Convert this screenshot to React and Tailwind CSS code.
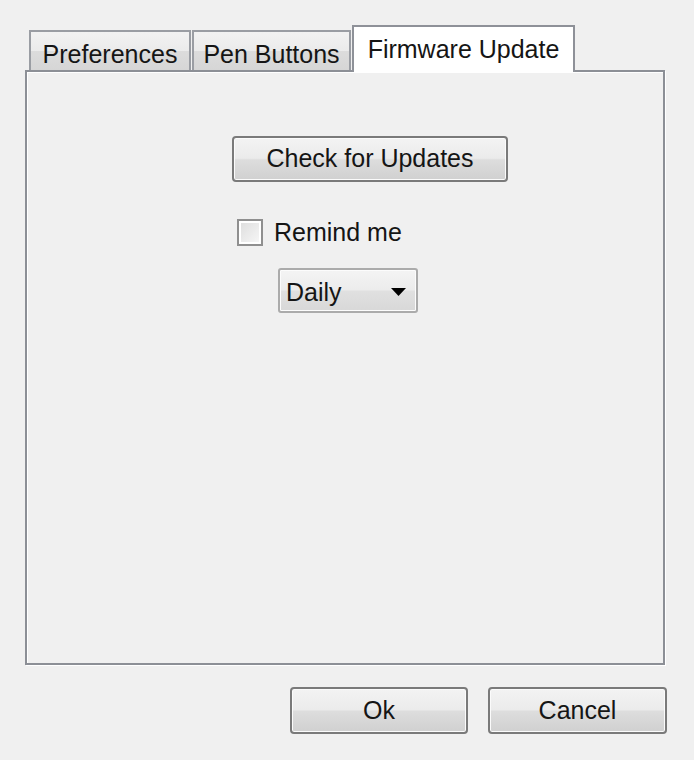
import { useState } from "react";

const font = { fontFamily: '"Liberation Sans", Arial, sans-serif' };

const btn =
    "flex items-center justify-center rounded-[4px] border-2 border-[#7a7a7a] bg-[linear-gradient(to_bottom,#f3f3f3_0%,#ebebeb_48%,#dddddd_52%,#d0d0d0_100%)] shadow-[inset_0_0_0_1px_#fbfbfb] text-[25px] text-[#151515]";

const Tab = ({ label, active, onClick, w }) => {
    if (active) {
        return (
            <button
                onClick={onClick}
                className={`relative z-10 -mb-[2px] ml-[1px] flex h-[47px] ${w} items-start justify-center border-2 border-b-0 border-[#8e9198] bg-white pt-[4px] text-[25px] text-[#151515]`}
            >
                {label}
            </button>
        );
    }
    return (
        <button
            onClick={onClick}
            className={`ml-[1px] flex h-[40px] ${w} items-center justify-center border-2 border-b-0 border-[#9a9da3] bg-[linear-gradient(to_bottom,#f2f2f2_0%,#ebebeb_50%,#dcdcdc_51%,#d6d6d6_100%)] pt-[7px] text-[25px] text-[#151515]`}
        >
            {label}
        </button>
    );
};

const App = () => {
    const [tab, setTab] = useState(2);
    const [remind, setRemind] = useState(false);

    return (
        <div className="h-[760px] w-[694px] bg-[#f0f0f0] pl-[25px] pt-[25px]" style={font}>
            {/* TABS */}
            <div className="flex h-[45px] items-end pl-[3px]">
                <Tab label="Preferences" w="w-[162px]" active={tab === 0} onClick={() => setTab(0)} />
                <Tab label="Pen Buttons" w="w-[159px]" active={tab === 1} onClick={() => setTab(1)} />
                <Tab label="Firmware Update" w="w-[223px]" active={tab === 2} onClick={() => setTab(2)} />
            </div>

            {/* PANEL */}
            <div className="h-[595px] w-[640px] border-2 border-[#8c8f96] shadow-[inset_1px_1px_0_#ffffff,1px_1px_0_#ffffff] pl-[205px] pt-[64px]">
                <button className={`${btn} h-[46px] w-[276px]`}>Check for Updates</button>

                <label className="mt-[37px] ml-[5px] flex h-[27px] cursor-pointer items-center">
                    <span
                        onClick={() => setRemind(!remind)}
                        className="flex h-[27px] w-[26px] items-center justify-center border-2 border-[#8f8f8f] bg-[linear-gradient(to_bottom_right,#dcdcdc,#f8f8f8)] shadow-[inset_0_0_0_2px_#ffffff]"
                    >
                        {remind && <span className="text-[18px] leading-none text-[#222]">✓</span>}
                    </span>
                    <span className="ml-[11px] text-[25px] text-[#151515]">Remind me</span>
                </label>

                <div className="mt-[22px] ml-[46px] flex h-[45px] w-[140px] items-center justify-between rounded-[3px] border-2 border-[#ababab] bg-[linear-gradient(to_bottom,#f4f4f4_0%,#ececec_48%,#e0e0e0_52%,#d8d8d8_100%)] shadow-[inset_0_0_0_1px_#fcfcfc] pl-[6px] pr-[10px]">
                    <span className="pt-[4px] text-[25px] text-[#151515]">Daily</span>
                    <svg width="15" height="8" viewBox="0 0 15 8" className="mt-[3px]">
                        <path d="M0 0 H15 L7.5 8 Z" fill="#000" />
                    </svg>
                </div>
            </div>

            {/* FOOTER */}
            <div className="ml-[265px] mt-[22px] flex gap-[20px]">
                <button className={`${btn} h-[47px] w-[178px]`}>Ok</button>
                <button className={`${btn} h-[47px] w-[179px]`}>Cancel</button>
            </div>
        </div>
    );
};

export default App;
